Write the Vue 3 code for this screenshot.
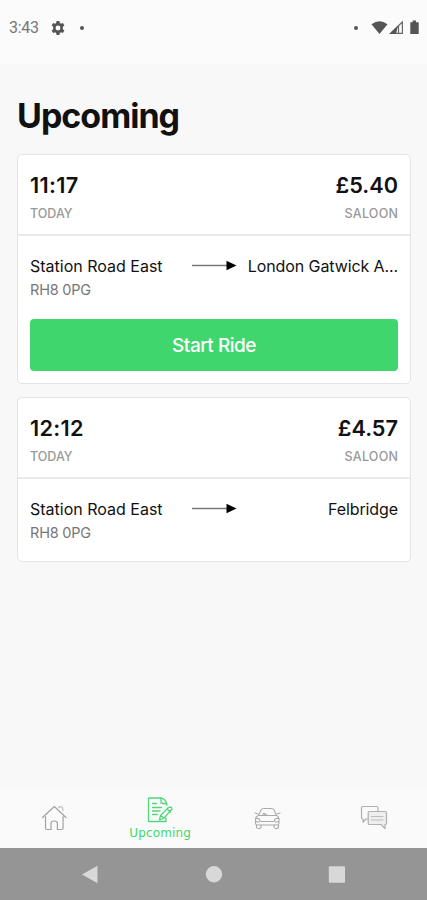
<script setup>
const rides = [
  { time: '11:17', day: 'TODAY', fare: '£5.40', type: 'SALOON', from: 'Station Road East', code: 'RH8 0PG', to: 'London Gatwick A...', active: true },
  { time: '12:12', day: 'TODAY', fare: '£4.57', type: 'SALOON', from: 'Station Road East', code: 'RH8 0PG', to: 'Felbridge', active: false },
]
</script>

<template>
  <div class="screen">
    <header class="status">
      <span class="clock">3:43</span>
      <svg class="gear" width="14" height="14" viewBox="0 0 24 24">
        <path fill="#555" fill-rule="evenodd" d="M9.500 0h5l.6 3.400 2 1.200 3.300-1.200 2.500 4.400-2.600 2.200v4l2.600 2.200-2.500 4.400-3.300-1.200-2 1.200-.6 3.400h-5l-.6-3.400-2-1.200-3.300 1.200-2.500-4.400 2.600-2.200v-4L1.100 7.800l2.500-4.400 3.300 1.200 2-1.200zM12 7.800a4.200 4.200 0 1 0 0 8.400 4.200 4.200 0 0 0 0-8.400z" />
      </svg>
      <i class="dot"></i>
      <span class="spacer"></span>
      <i class="dot dot-right"></i>
      <svg width="49" height="16" viewBox="0 0 49 16">
        <path fill="#555" d="M.5 4.200Q8.500-1.500 16.500 4.200L8.500 14z" />
        <path fill="none" stroke="#666" stroke-width="1.200" d="M19.500 13.300H31.400V2zM27.500 13V6" />
        <path fill="#555" d="M18.500 14 27 5.500 25 14z" />
        <path fill="#555" d="M39.300 2.200h2.400V.5h3.300v1.700h2.700v11.800h-8.400z" />
      </svg>
    </header>

    <main class="content">
      <h1>Upcoming</h1>
      <article v-for="ride in rides" :key="ride.time" class="card">
        <div class="summary">
          <div>
            <div class="big">{{ ride.time }}</div>
            <div class="label">{{ ride.day }}</div>
          </div>
          <div class="right">
            <div class="big fare">{{ ride.fare }}</div>
            <div class="label type">{{ ride.type }}</div>
          </div>
        </div>
        <div class="trip">
          <div class="route">
            <div class="from">
              <div class="place">{{ ride.from }}</div>
              <div class="code">{{ ride.code }}</div>
            </div>
            <svg class="arrow" width="45" height="12" viewBox="0 0 45 12">
              <path d="M0 5.500H36" stroke="#777" stroke-width="1.300" />
              <path d="M34.500 .7 44.500 5.500l-10 4.800z" fill="#000" />
            </svg>
            <div class="place to">{{ ride.to }}</div>
          </div>
          <button v-if="ride.active" class="start">Start Ride</button>
        </div>
      </article>
    </main>

    <nav class="tabs">
      <div class="tab home">
        <svg width="28" height="28" viewBox="0 0 28 28" fill="none" stroke="#a2a2a2" stroke-width="1.200" stroke-linejoin="round" stroke-linecap="round">
          <path d="M2.500 13.500 14.300 2.500 26 13.500" />
          <path d="M5.500 12.500V24q0 1.500 1.500 1.500h4V19.500q0-2.500 3.200-2.500t3.200 2.500v6h4q1.700 0 1.700-1.500V12.500" />
          <path d="M18.500 3.500q4-2.500 4.500 3" stroke="#bcbcbc" />
        </svg>
      </div>
      <div class="tab selected">
        <svg width="28" height="28" viewBox="0 0 28 28" fill="none" stroke="#54d67b" stroke-width="1.300" stroke-linejoin="round" stroke-linecap="round">
          <path d="M20 23v3.500H2.500V3H15q5 1 6 7" />
          <path d="M15 3v5l5.500 1M6.500 8.500h4M6.500 12.500h9M6.500 16h7.500M6.500 19.500h5" />
          <path d="m14.500 20.500 8-8q3-1.500 3.500 1.500l-8 9-4.500 2zM21 14l3.500 3M14.500 20.500l3.500 2.500" />
        </svg>
        <span>Upcoming</span>
      </div>
      <div class="tab">
        <svg width="28" height="28" viewBox="0 0 28 28" fill="none" stroke="#aaa" stroke-width="1.100" stroke-linejoin="round" stroke-linecap="round">
          <path d="M5.500 11.500 8 6q.7-1.500 3-1.500h7q2.300 0 3 1.500l2.500 5.500M5.500 11.500h18q2.500 1 2.500 4v4q0 1.500-2 1.500H4.500q-2 0-2-1.500v-4q0-3 3-4z" />
          <path d="M2 9l3 1M27 9l-3 1M3.500 21v2.500q2 2.500 4.500 0V21M21 21v2.500q2 2.500 4.500 0V21M8 17.500h12.500M3 14.500q4-.5 4 2t-4 1M25.500 14.500q-4-.5-4 2t4 1M9.500 11l1.500-2 1 2 1.500-1" />
        </svg>
      </div>
      <div class="tab">
        <svg width="28" height="28" viewBox="0 0 28 28" fill="none" stroke="#b0b0b0" stroke-width="1.200" stroke-linejoin="round" stroke-linecap="round">
          <path d="M8 15H6l-3 3v-3q-1.500 0-1.500-1.500V4q0-1.500 1.500-1.500h13.500Q18 2.500 18 4v3.500" />
          <path fill="#eee" d="M9.500 7.500h15.800q1.200 0 1.200 1.300v10.400q0 1.300-1.500 1.300v4l-4-4H9.500q-1.300 0-1.300-1.300V8.800q0-1.300 1.300-1.300z" />
          <path d="M11.500 12.500H23M11.500 16H23" stroke="#bbb" />
        </svg>
      </div>
    </nav>

    <footer class="system">
      <svg width="18" height="20" viewBox="0 0 18 20"><path d="M1 10.500 16.500 1.800v17.400z" fill="#d8d8d8" /></svg>
      <svg width="18" height="20" viewBox="0 0 18 20"><circle cx="9" cy="10.300" r="8.200" fill="#d8d8d8" /></svg>
      <svg width="18" height="20" viewBox="0 0 18 20"><rect x=".8" y="2.300" width="16.200" height="16.500" rx="1" fill="#d8d8d8" /></svg>
    </footer>
  </div>
</template>

<style>
body { margin: 0; background: #f8f8f8; }
</style>

<style scoped>
.screen { width: 427px; height: 900px; display: flex; flex-direction: column; background: #f8f8f8; font-family: Inter, "Liberation Sans", sans-serif; color: #111; overflow: hidden; }
.status { height: 64px; box-sizing: border-box; padding: 20px 7px 29px 9px; display: flex; align-items: center; background: #fbfbfb; flex: none; }
.clock { font: 400 16px/16px Roboto, sans-serif; color: #777; letter-spacing: -0.3px; width: 42px; }
.dot { width: 4px; height: 4px; border-radius: 50%; background: #555; margin-left: 15px; }
.spacer { flex: 1; }
.dot-right { margin: 0 13px 0 0; }
.content { flex: 1; padding: 31px 16px 0 17px; }
h1 { margin: 0 0 17px; font-size: 34px; line-height: 42px; font-weight: 700; letter-spacing: -1px; }
.card { box-sizing: border-box; border: 1px solid #e4e4e4; border-radius: 5px; background: #fff; margin-bottom: 13px; }
.summary { height: 81px; box-sizing: border-box; border-bottom: 2px solid #e9e9e9; padding: 17px 12px 0; display: flex; justify-content: space-between; }
.right { text-align: right; }
.big { font-size: 21.700px; line-height: 26px; font-weight: 600; letter-spacing: 0.300px; }
.fare { letter-spacing: 0; }
.label { font-size: 12.500px; line-height: 16px; margin-top: 8px; font-weight: 500; color: #999; }
.type { letter-spacing: 0.250px; margin-right: -0.250px; }
.trip { padding: 18px 12px 12px; }
.route { display: flex; align-items: flex-start; height: 52px; }
.from { width: 162px; }
.place { font-size: 16px; line-height: 24px; white-space: nowrap; }
.code { font-size: 14.500px; line-height: 24px; color: #777; letter-spacing: -0.200px; }
.arrow { margin-top: 6px; flex: none; }
.to { flex: 1; text-align: right; letter-spacing: -0.100px; }
.start { display: block; width: 100%; height: 52px; margin-top: 13px; padding: 2px 0 0; border: 0; border-radius: 4px; background: #3fd76d; color: #fff; font: 500 19px/50px Inter, sans-serif; letter-spacing: -0.500px; }
.tabs { height: 60px; background: #fafafa; display: grid; grid-template-columns: repeat(4, 1fr); flex: none; }
.tab { display: flex; flex-direction: column; align-items: center; justify-content: center; }
.home { padding-left: 2px; }
.selected { justify-content: flex-start; padding-top: 7px; color: #3fd76d; }
.selected span { font: 400 12px/16px "DejaVu Sans", sans-serif; letter-spacing: 0.150px; margin-top: 2px; }
.system { height: 52px; background: #959595; flex: none; padding: 0 81px; display: flex; align-items: center; justify-content: space-between; }
</style>
